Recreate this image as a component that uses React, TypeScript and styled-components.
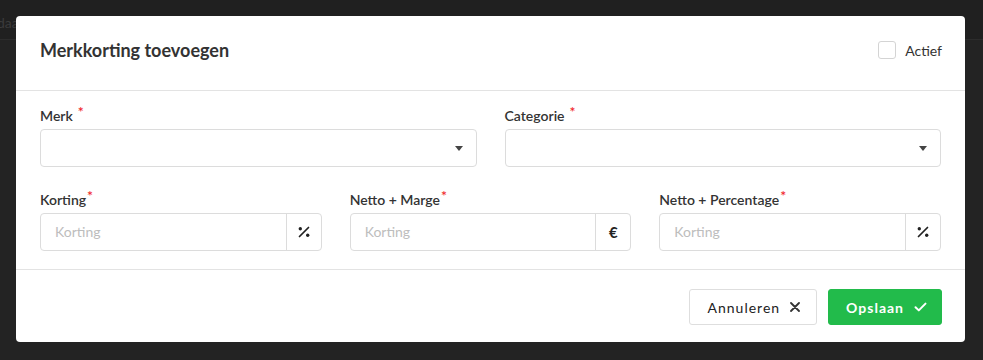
import styled, { createGlobalStyle } from "styled-components";

const GlobalStyle = createGlobalStyle`
  * { box-sizing: border-box; }
  html, body { margin: 0; padding: 0; }
  body {
    background: #232323;
    font-family: Lato, "Open Sans", sans-serif;
    color: #333;
    height: 360px;
    overflow: hidden;
  }
`;

const Backdrop = styled.div`
  position: relative;
  width: 983px;
  height: 360px;
  background: #232323;
`;

const PageBar = styled.div`
  height: 40px;
  border-bottom: 1px solid #2c2c2c;
  background: #202020;
  color: #3b3b3b;
  font-size: 14px;
  padding: 14px 0 0 0;
  margin-left: -3px;
`;

const Modal = styled.div`
  position: absolute;
  top: 16px;
  left: 16px;
  width: 949px;
  height: 326px;
  background: #fff;
  border-radius: 4px;
  display: flex;
  flex-direction: column;
`;

const Header = styled.div`
  height: 75px;
  padding: 0 24px 6px;
  display: flex;
  align-items: center;
  justify-content: space-between;
  border-bottom: 1px solid #e3e3e3;
`;

const Title = styled.h2`
  margin: 0;
  font-size: 18px;
  font-weight: 700;
  color: #333;
`;

const CheckLabel = styled.label`
  display: flex;
  align-items: center;
  gap: 9px;
  font-size: 14px;
  color: #333;
  margin-right: -1px;
`;

const CheckBox = styled.span`
  width: 18px;
  height: 18px;
  border: 1px solid #d4d4d4;
  border-radius: 3px;
  background: #fff;
`;

const Body = styled.div`
  flex: 1;
  padding: 16px 24px 0;
  display: flex;
  flex-direction: column;
  gap: 24px;
`;

const Row = styled.div<{ $cols: number }>`
  display: grid;
  grid-template-columns: repeat(${(p) => p.$cols}, 1fr);
  column-gap: 28px;
`;

const Field = styled.div`
  display: flex;
  flex-direction: column;
`;

const Label = styled.label`
  font-size: 14px;
  font-weight: 600;
  color: #333;
  height: 20px;
  line-height: 18px;
  margin-bottom: 2px;
`;

const Star = styled.sup<{ $gap?: boolean }>`
  color: #f0262b;
  font-size: 14px;
  margin-left: ${(p) => (p.$gap ? "5px" : "1px")};
  vertical-align: 4px;
  line-height: 0;
`;

const Select = styled.div`
  height: 38px;
  border: 1px solid #dcdcdc;
  border-radius: 4px;
  display: flex;
  align-items: center;
  justify-content: flex-end;
  padding-right: 13px;
`;

const Caret = styled.span`
  width: 0;
  height: 0;
  border-left: 4.5px solid transparent;
  border-right: 4.5px solid transparent;
  border-top: 5px solid #444;
`;

const InputGroup = styled.div`
  height: 38px;
  border: 1px solid #dcdcdc;
  border-radius: 4px;
  display: flex;
`;

const Input = styled.input`
  flex: 1;
  min-width: 0;
  border: none;
  outline: none;
  background: transparent;
  padding: 0 14px 2px;
  font-family: Lato, sans-serif;
  font-size: 14px;
  color: #333;
  &::placeholder { color: #bdbdbd; }
`;

const Addon = styled.span`
  width: 35px;
  border-left: 1px solid #dcdcdc;
  display: flex;
  align-items: center;
  justify-content: center;
  font-size: 15px;
  font-weight: 700;
  color: #222;
`;

const Footer = styled.div`
  height: 73px;
  border-top: 1px solid #e3e3e3;
  padding: 0 23px;
  display: flex;
  align-items: center;
  justify-content: flex-end;
  gap: 11px;
`;

const Button = styled.button<{ $primary?: boolean }>`
  height: 36px;
  border-radius: 3px;
  font-family: Lato, sans-serif;
  font-size: 14px;
  letter-spacing: 1px;
  display: flex;
  align-items: center;
  gap: 10px;
  padding: ${(p) => (p.$primary ? "0 14px 0 17px" : "0 16px 0 18px")};
  border: 1px solid ${(p) => (p.$primary ? "#22bb4b" : "#dedede")};
  background: ${(p) => (p.$primary ? "#22bb4b" : "#fff")};
  color: ${(p) => (p.$primary ? "#fff" : "#222")};
  font-weight: ${(p) => (p.$primary ? 700 : 400)};
  margin-top: 2px;
`;

const Percent = () => (
  <svg width="12" height="12" viewBox="0 0 12 12">
    <line x1="10.5" y1="1.5" x2="1.5" y2="10.5" stroke="#222" strokeWidth="1.7" strokeLinecap="round" />
    <circle cx="2.3" cy="2.8" r="1.7" fill="#222" />
    <circle cx="9.7" cy="9.2" r="1.7" fill="#222" />
  </svg>
);

const Cross = () => (
  <svg width="10" height="10" viewBox="0 0 10 10">
    <path d="M1 1L9 9M9 1L1 9" stroke="#333" strokeWidth="1.8" strokeLinecap="round" />
  </svg>
);

const Check = () => (
  <svg width="13" height="10" viewBox="0 0 13 10">
    <path d="M1.5 5.2L4.8 8.4L11.5 1.6" stroke="#fff" strokeWidth="2" fill="none" strokeLinecap="round" strokeLinejoin="round" />
  </svg>
);

const addonFields = [
  { label: "Korting", addon: <Percent /> },
  { label: "Netto + Marge", addon: "€" },
  { label: "Netto + Percentage", addon: <Percent /> },
];

export default function App() {
  return (
    <Backdrop>
      <GlobalStyle />
      <PageBar>daar</PageBar>
      <Modal>
        <Header>
          <Title>Merkkorting toevoegen</Title>
          <CheckLabel>
            <CheckBox />
            Actief
          </CheckLabel>
        </Header>
        <Body>
          <Row $cols={2}>
            {["Merk", "Categorie"].map((l) => (
              <Field key={l}>
                <Label>
                  {l}
                  <Star $gap>*</Star>
                </Label>
                <Select>
                  <Caret />
                </Select>
              </Field>
            ))}
          </Row>
          <Row $cols={3}>
            {addonFields.map((f) => (
              <Field key={f.label}>
                <Label>
                  {f.label}
                  <Star>*</Star>
                </Label>
                <InputGroup>
                  <Input placeholder="Korting" />
                  <Addon>{f.addon}</Addon>
                </InputGroup>
              </Field>
            ))}
          </Row>
        </Body>
        <Footer>
          <Button>
            Annuleren <Cross />
          </Button>
          <Button $primary>
            Opslaan <Check />
          </Button>
        </Footer>
      </Modal>
    </Backdrop>
  );
}
